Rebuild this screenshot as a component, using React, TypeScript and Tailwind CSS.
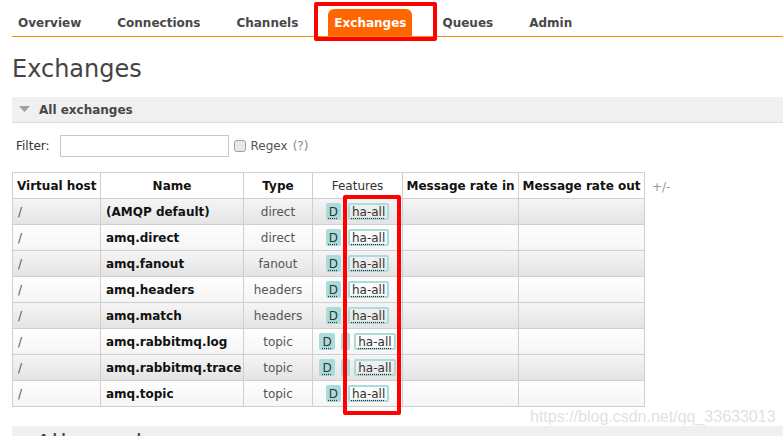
import React from "react";

const tabs = ["Overview", "Connections", "Channels", "Exchanges", "Queues", "Admin"];

const rows = [
  { name: "(AMQP default)", type: "direct", internal: false },
  { name: "amq.direct", type: "direct", internal: false },
  { name: "amq.fanout", type: "fanout", internal: false },
  { name: "amq.headers", type: "headers", internal: false },
  { name: "amq.match", type: "headers", internal: false },
  { name: "amq.rabbitmq.log", type: "topic", internal: true },
  { name: "amq.rabbitmq.trace", type: "topic", internal: true },
  { name: "amq.topic", type: "topic", internal: false },
];

function Triangle() {
  return (
    <svg width="11" height="7" viewBox="0 0 11 7" className="shrink-0">
      <path d="M0,0 L11,0 L5.5,6 Z" fill="#a0a0a0" />
    </svg>
  );
}

function Badge({ children, kind }: { children: React.ReactNode; kind: "fill" | "outline" }) {
  return (
    <span
      className={`inline-flex items-center h-[17px] rounded-[2px] leading-none ${
        kind === "fill" ? "bg-[#abdcdc] px-[3px]" : "border-2 border-[#abdcdc] px-[2px]"
      }`}
    >
      <span className="underline decoration-dotted underline-offset-[2px] decoration-[#333]">{children}</span>
    </span>
  );
}

export default function App() {
  return (
    <div className="relative w-[783px] h-[436px] overflow-hidden bg-white font-['DejaVu_Sans',sans-serif] text-[12px] text-[#484848]">
      {/* tab bar */}
      <div className="ml-[12px] pt-[9px] flex border-b border-[#ff8a00] h-[37px]">
        {tabs.map((t) => (
          <div
            key={t}
            className={`h-[27px] px-[6px] mr-[24px] flex items-center font-bold rounded-t-[6px] ${
              t === "Exchanges" ? "bg-[#ff6600] text-white" : "text-[#484848]"
            }`}
          >
            {t}
          </div>
        ))}
      </div>

      <h1 className="ml-[12px] mt-[18px] text-[24px] leading-[29px] text-[#444]">Exchanges</h1>

      {/* section */}
      <div className="ml-[12px] mt-[13px] h-[26px] bg-[#f0f0f0] border-b border-[#dcdcdc] flex items-center gap-[9px] pl-[7px] font-bold text-[#484848]">
        <Triangle />
        <span>All exchanges</span>
      </div>

      <div className="ml-[16px] mt-[12px] flex items-center h-[22px] text-[#333]">
        <span>Filter:</span>
        <span className="ml-[10px] w-[169px] h-[22px] border border-[#c8c8c8] bg-white" />
        <span className="ml-[5px] w-[12px] h-[12px] rounded-[3px] border border-[#a0a0a0] bg-[#e8e8e8]" />
        <span className="ml-[5px] text-[#555]">Regex</span>
        <span className="ml-[5px] text-[#8a8a8a]">(?)</span>
      </div>

      {/* table */}
      <div className="ml-[12px] mt-[15px] flex items-start">
        <table className="table-fixed border-collapse w-[632px]">
          <colgroup>
            <col className="w-[88px]" />
            <col className="w-[143px]" />
            <col className="w-[69px]" />
            <col className="w-[90px]" />
            <col className="w-[116px]" />
            <col className="w-[126px]" />
          </colgroup>
          <thead>
            <tr className="h-[26px] bg-white text-[#111]">
              <th className="border border-[#cfcfcf] font-bold pl-[4px] pr-0 text-left whitespace-nowrap">Virtual host</th>
              <th className="border border-[#cfcfcf] font-bold">Name</th>
              <th className="border border-[#cfcfcf] font-bold">Type</th>
              <th className="border border-[#cfcfcf] font-normal text-[#333]">Features</th>
              <th className="border border-[#cfcfcf] font-bold whitespace-nowrap">Message rate in</th>
              <th className="border border-[#cfcfcf] font-bold whitespace-nowrap">Message rate out</th>
            </tr>
          </thead>
          <tbody>
            {rows.map((r, i) => (
              <tr
                key={r.name}
                className={`h-[26px] ${
                  i % 2 === 0
                    ? "bg-[linear-gradient(#f5f5f5,#e3e3e3)]"
                    : "bg-[linear-gradient(#fefefe,#f5f5f5)]"
                }`}
              >
                <td className="border border-[#cfcfcf] px-[5px] text-[#555]">/</td>
                <td className="border border-[#cfcfcf] px-[5px] font-bold text-[#111] whitespace-nowrap">{r.name}</td>
                <td className="border border-[#cfcfcf] text-center text-[#555]">{r.type}</td>
                <td className="border border-[#cfcfcf] text-[#333]">
                  <div className="flex justify-center items-center">
                    <Badge kind="fill">D</Badge>
                    {r.internal && (
                      <span className="ml-[6px]">
                        <Badge kind="fill">I</Badge>
                      </span>
                    )}
                    <span className={r.internal ? "ml-[4px]" : "ml-[7px]"}>
                      <Badge kind="outline">ha-all</Badge>
                    </span>
                  </div>
                </td>
                <td className="border border-[#cfcfcf]" />
                <td className="border border-[#cfcfcf]" />
              </tr>
            ))}
          </tbody>
        </table>
        <span className="ml-[7px] mt-[6px] text-[#999]">+/-</span>
      </div>

      {/* next section */}
      <div className="ml-[12px] mt-[19px] h-[26px] bg-[#f0f0f0] flex items-center gap-[9px] pl-[7px] font-bold text-[#484848]">
        <Triangle />
        <span>Add a new exchange</span>
      </div>

      {/* annotation boxes */}
      <div className="absolute left-[314px] top-[2px] w-[123px] h-[39px] border-4 border-[#ff0000] rounded-[2px]" />
      <div className="absolute left-[343px] top-[195px] w-[58px] h-[220px] border-4 border-[#ff0000] rounded-[2px]" />

      {/* watermark */}
      <div className="absolute left-[530px] top-[405px] font-['Liberation_Sans',sans-serif] text-[16px] text-[#e2e2e2]">
        https://blog.csdn.net/qq_33633013
      </div>
    </div>
  );
}
